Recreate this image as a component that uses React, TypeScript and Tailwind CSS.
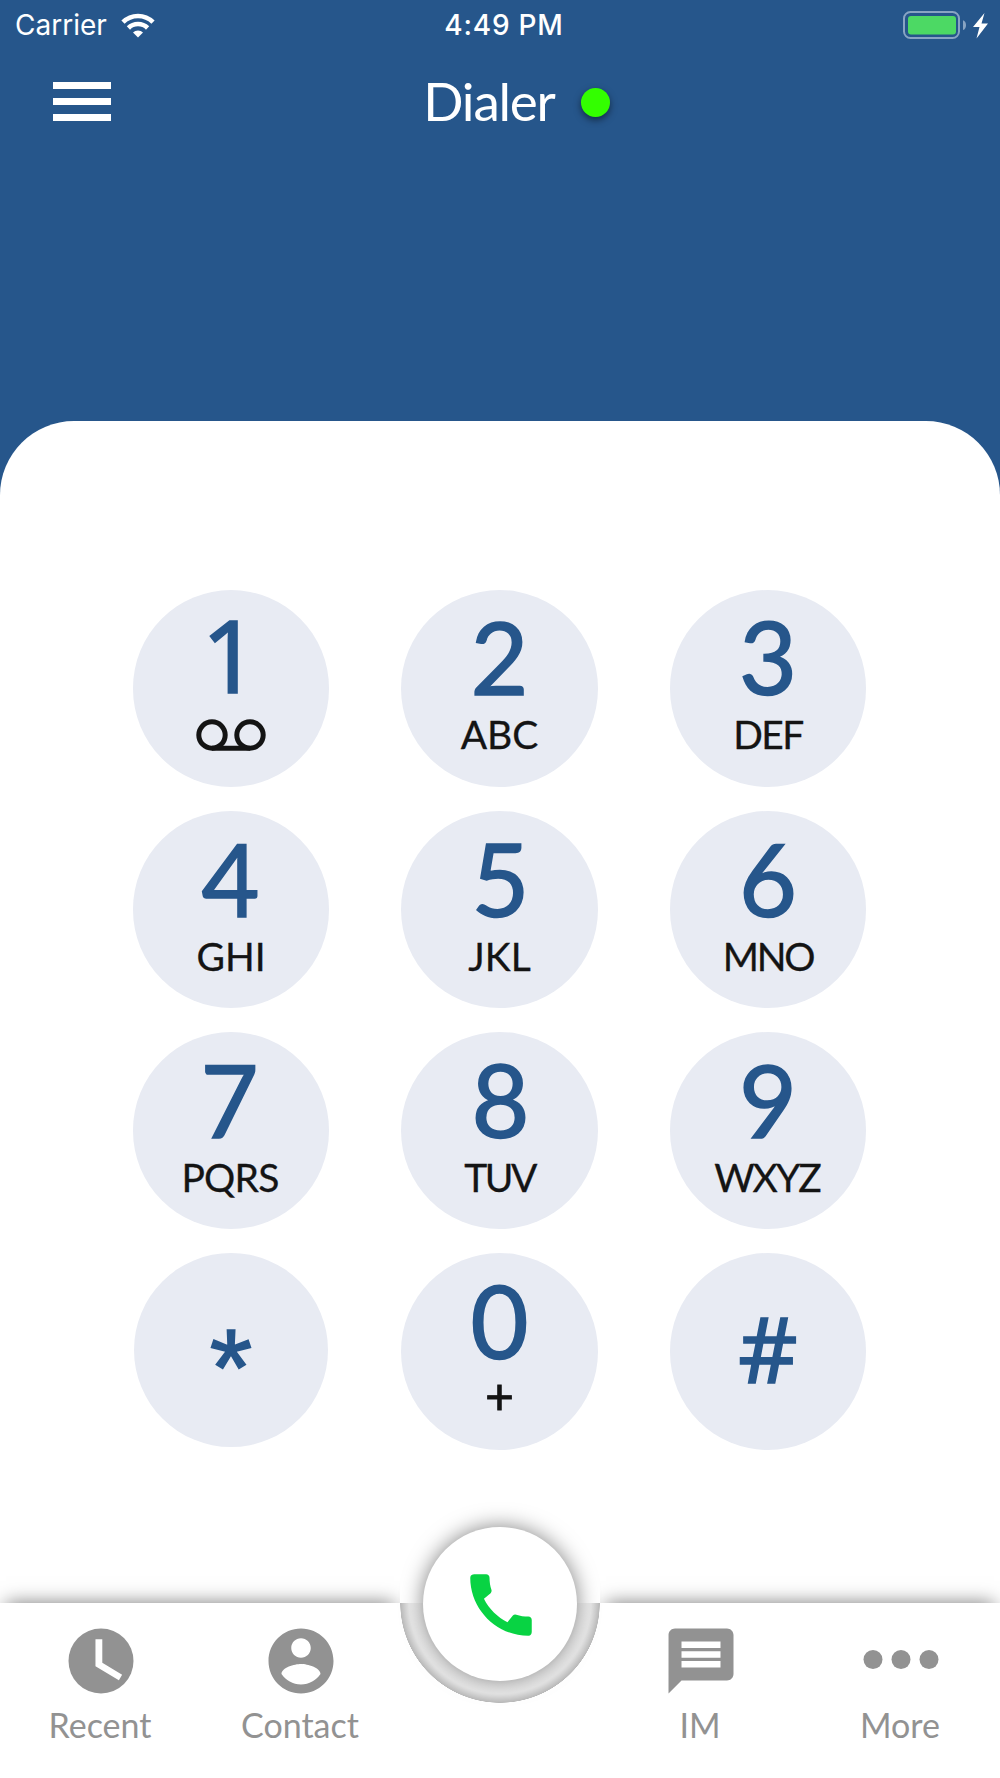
import React from 'react';
import clsx from 'clsx';
import { MdCall, MdMessage } from 'react-icons/md';

interface DialKey {
  digit: string;
  digitClass?: string;
  letters?: string;
  lettersClass?: string;
}

const DIAL_KEYS: DialKey[] = [
  { digit: '1', digitClass: "-mt-[3px] pr-0.5 font-['Noto_Sans']" },
  { digit: '2', digitClass: '-mt-px', letters: 'ABC' },
  { digit: '3', digitClass: '-mt-px', letters: 'DEF', lettersClass: 'tracking-[-1.5px]' },
  { digit: '4', digitClass: 'pr-px', letters: 'GHI' },
  { digit: '5', digitClass: 'pl-0.5', letters: 'JKL' },
  { digit: '6', letters: 'MNO', lettersClass: 'tracking-[-2.2px]' },
  { digit: '7', digitClass: 'pr-[3px]', letters: 'PQRS', lettersClass: 'pr-0.5 tracking-[-0.8px]' },
  { digit: '8', digitClass: 'pl-0.5', letters: 'TUV', lettersClass: 'tracking-[-2.5px]' },
  { digit: '9', letters: 'WXYZ', lettersClass: 'pr-0.5 tracking-[-2px]' },
  { digit: '*', digitClass: "pt-[60px] font-['Liberation_Sans'] text-[109px] leading-[109px]" },
  { digit: '0', letters: '+', lettersClass: 'mt-[5px] text-[50px] [-webkit-text-stroke:0.8px_#141414]' },
  { digit: '#', digitClass: "pt-[49px] font-['Noto_Sans'] text-[92px] leading-[92px]" },
];

const WifiIcon = () => (
  <svg width="34" height="25" viewBox="0 0 34 25" fill="none">
    <path d="M2 9.2a21.2 21.2 0 0 1 30 0" stroke="white" strokeWidth="4.6" />
    <path d="M7.4 15a13.6 13.6 0 0 1 19.2 0" stroke="white" strokeWidth="4.6" />
    <path d="M17 24.5l-5-5a7 7 0 0 1 10 0z" fill="white" />
  </svg>
);

const BatteryIcon = () => (
  <svg width="85" height="28" viewBox="0 0 85 28">
    <rect x="1" y="1" width="55" height="26" rx="6.5" fill="none" stroke="#88a4c3" strokeWidth="2" />
    <rect x="5" y="5" width="48" height="18.4" rx="3" fill="#4cd964" />
    <path d="M60 9.2c4 1 4 8.8 0 9.8z" fill="#88a4c3" />
    <path d="M81.5 2L70 16h6.5l-3 11.500L85 12.500h-6.500z" fill="white" />
  </svg>
);

const VoicemailIcon = () => (
  <svg width="70" height="32" viewBox="0 0 70 32" fill="none" stroke="#141414" strokeWidth="5">
    <circle cx="16" cy="16" r="13.2" />
    <circle cx="54" cy="16" r="13.2" />
    <path d="M16 29.2h38" />
  </svg>
);

const RecentIcon = () => (
  <svg width="78" height="78" viewBox="0 0 24 24" fill="currentColor">
    <circle cx="12" cy="12" r="10" />
    <path d="M10.300 5.300h2.100v7.200l6.100 3.700-1 1.700-7.200-4.300z" fill="white" />
  </svg>
);

const ContactIcon = () => (
  <svg width="78" height="78" viewBox="0 0 24 24" fill="currentColor">
    <path d="M12 2C6.480 2 2 6.480 2 12s4.480 10 10 10 10-4.480 10-10S17.520 2 12 2zm0 3c1.660 0 3 1.340 3 3s-1.340 3-3 3-3-1.340-3-3 1.340-3 3-3zm0 14.200c-2.500 0-4.710-1.280-6-3.220.030-1.990 4-3.080 6-3.080 1.990 0 5.970 1.090 6 3.080-1.290 1.940-3.500 3.220-6 3.220z" />
  </svg>
);

const MoreIcon = () => (
  <svg width="78" height="78" viewBox="0 0 78 78" fill="currentColor">
    <circle cx="11" cy="37.5" r="9.5" />
    <circle cx="39" cy="37.5" r="9.5" />
    <circle cx="67" cy="37.5" r="9.5" />
  </svg>
);

const StatusBar = () => (
  <div className="grid h-12 grid-cols-3 items-center pt-0.5 font-['Inter',sans-serif] text-[28px] leading-none text-white">
    <div className="flex items-center gap-3.5 pl-[15px]">
      <span>Carrier</span>
      <WifiIcon />
    </div>
    <div className="pl-2 text-center font-medium tracking-[0.8px]">4:49 PM</div>
    <div className="flex justify-end pr-3">
      <BatteryIcon />
    </div>
  </div>
);

const Header = () => (
  <div className="grid h-[106px] grid-cols-3 items-center">
    <button className="flex w-fit flex-col gap-[9px] pl-[53px]" aria-label="Menu">
      <span className="h-[7px] w-[58px] bg-white" />
      <span className="h-[7px] w-[58px] bg-white" />
      <span className="h-[7px] w-[58px] bg-white" />
    </button>
    <div className="flex items-center justify-center gap-[26px] pt-0.5 pl-[33px]">
      <h1 className="pb-[3px] text-[53px] leading-none tracking-[-1.2px] text-white">Dialer</h1>
      <span className="size-[29px] rounded-full bg-[#33ff00] shadow-[0_3px_7px_rgba(0,0,0,0.5)]" />
    </div>
  </div>
);

const KeyButton: React.FC<DialKey> = ({ digit, digitClass, letters, lettersClass }) => {
  const symbol = digit === '*' || digit === '#';

  return (
    <button
      className={clsx(
        'flex flex-col items-center justify-self-center rounded-full bg-[#e8ebf3]',
        digit === '*' ? 'size-[194px]' : 'size-[196.5px]',
        !symbol && 'pt-[17px]'
      )}
    >
      <span
        className={clsx(
          'text-[#26568b] [-webkit-text-stroke:1.6px_#26568b]',
          !symbol && 'h-[100px] text-[100px] leading-[100px]',
          digitClass
        )}
      >
        {digit}
      </span>
      {digit === '1' && (
        <span className="mt-[15px]">
          <VoicemailIcon />
        </span>
      )}
      {letters && (
        <span
          className={clsx(
            'leading-[40px] text-[#141414]',
            letters !== '+' && 'mt-2 text-[39px] [-webkit-text-stroke:0.3px_#141414]',
            lettersClass
          )}
        >
          {letters}
        </span>
      )}
    </button>
  );
};

interface TabProps {
  label: string;
  children: React.ReactNode;
}

const Tab: React.FC<TabProps> = ({ label, children }) => (
  <button className="flex w-[200px] flex-col items-center pt-[19px] text-[#929292]">
    <span className="pl-0.5">{children}</span>
    <span className="mt-[5px] text-[34px] leading-[40px]">{label}</span>
  </button>
);

const TabGroup = ({ children }: { children: React.ReactNode }) => (
  <div className="flex w-[400px] bg-white shadow-[0_-6px_18px_-6px_rgba(0,0,0,0.52)] [clip-path:inset(-30px_0_0_0)]">
    {children}
  </div>
);

const TabBar = () => (
  <nav className="relative flex h-[175px]">
    <TabGroup>
      <Tab label="Recent">
        <RecentIcon />
      </Tab>
      <Tab label="Contact">
        <ContactIcon />
      </Tab>
    </TabGroup>
    {/* Notch that the call button sits in */}
    <div className="w-[200px] bg-[radial-gradient(circle_at_50%_0,rgba(0,0,0,0.03)_80px,rgba(0,0,0,0.08)_91px,rgba(0,0,0,0.27)_99.5px,white_100px)]" />
    <TabGroup>
      <Tab label="IM">
        <MdMessage size={78} />
      </Tab>
      <Tab label="More">
        <MoreIcon />
      </Tab>
    </TabGroup>
    <button
      className="absolute -top-[76px] left-[423px] flex size-[154px] items-center justify-center rounded-full bg-white pt-0.5 pl-0.5 shadow-[0_0_21px_rgba(0,0,0,0.5)]"
      aria-label="Call"
    >
      <MdCall size={82} className="text-[#08d343]" />
    </button>
  </nav>
);

export default function App() {
  return (
    <div className="flex h-[1778px] w-[1000px] flex-col overflow-hidden bg-[#26568b] font-['Lato',sans-serif]">
      <StatusBar />
      <Header />
      <main className="mt-[267px] flex flex-1 flex-col justify-between rounded-t-[74px] bg-white">
        <div className="mt-[169px] grid grid-cols-[repeat(3,196.5px)] justify-center gap-x-[72px] gap-y-[24.5px] pr-px">
          {DIAL_KEYS.map((key) => (
            <KeyButton key={key.digit} {...key} />
          ))}
        </div>
        <TabBar />
      </main>
    </div>
  );
}
